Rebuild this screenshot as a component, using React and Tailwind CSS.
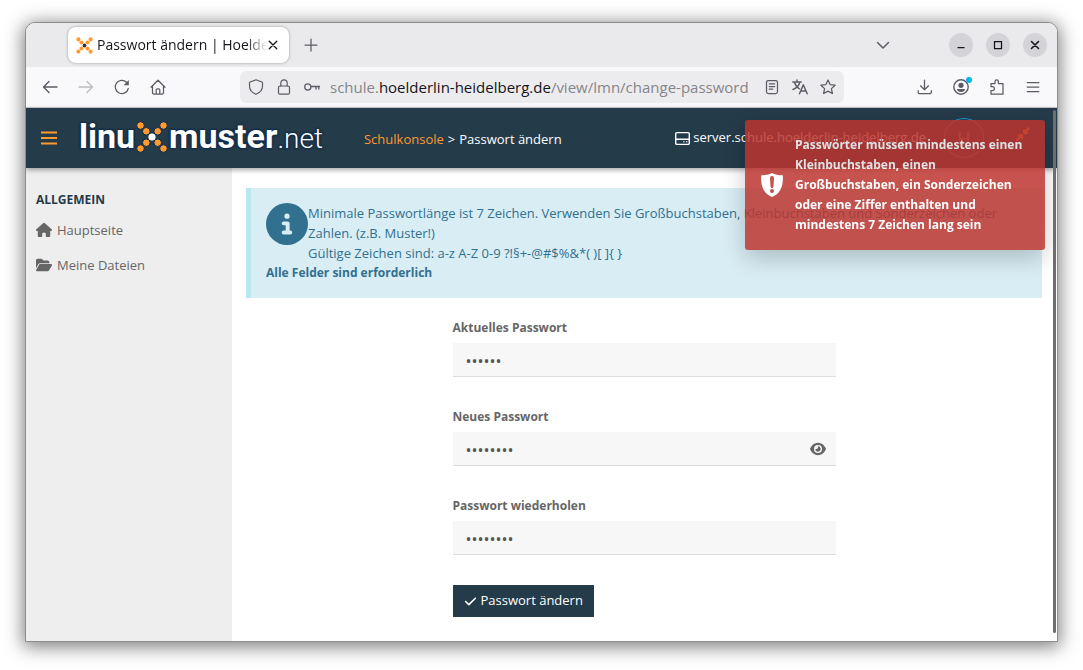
import React, { useState } from 'react';
import { FaCheck, FaCircleInfo, FaEye, FaFolderOpen, FaHouse, FaRegHardDrive } from 'react-icons/fa6';
import { FaCompressAlt } from 'react-icons/fa';

const strokeProps = {
  fill: 'none',
  stroke: 'currentColor',
  strokeLinecap: 'round',
  strokeLinejoin: 'round',
};

const Icon = ({ children, className = 'size-4', width = 1.25 }) => (
  <svg viewBox="0 0 16 16" className={className} strokeWidth={width} {...strokeProps} aria-hidden="true">
    {children}
  </svg>
);

const LogoMark = ({ className, center, outline = 0 }) => (
  <svg viewBox="0 0 32 32" className={className} aria-hidden="true">
    <g fill="#ff9a2e" stroke="#0b2748" strokeWidth={outline}>
      {[4.5, 10.3, 21.7, 27.5].map((p) => (
        <g key={p}>
          <circle cx={p} cy={p} r="3.8" />
          <circle cx={p} cy={32 - p} r="3.8" />
        </g>
      ))}
    </g>
    <circle cx="16" cy="16" r="3.6" fill={center} />
  </svg>
);

const ToolbarButton = ({ label, children, className = '' }) => (
  <button type="button" aria-label={label} className={`relative flex h-8 w-9 items-center justify-center ${className}`}>
    {children}
  </button>
);

const WindowButton = ({ label, children }) => (
  <button type="button" aria-label={label} className="flex size-6 items-center justify-center rounded-full bg-[#d4d3d8] text-[#15141a]">
    {children}
  </button>
);

const TitleBar = () => (
  <div className="flex h-11 items-center bg-[#eaeaec] pr-[10px] pl-[42px]">
    <div className="flex h-9 w-[221px] items-center rounded-lg bg-white pr-[10px] pl-2 shadow-[0_0_3px_rgba(0,0,0,0.35)]">
      <LogoMark className="mr-1 size-[17px] shrink-0" center="#1d3c5c" />
      <span className="min-w-0 flex-1 overflow-hidden text-sm whitespace-nowrap text-[#15141a] [mask-image:linear-gradient(to_right,black_88%,transparent)]">
        Passwort ändern | Hoelderlin
      </span>
      <button type="button" aria-label="Tab schließen" className="text-[#15141a]">
        <Icon className="size-3" width={1.8}>
          <path d="M3 3l10 10M13 3L3 13" />
        </Icon>
      </button>
    </div>
    <button type="button" aria-label="Neuer Tab" className="ml-[14px] text-[#5b5b66]">
      <Icon>
        <path d="M8 2v12M2 8h12" />
      </Icon>
    </button>
    <button type="button" aria-label="Alle Tabs" className="mr-[58px] ml-auto text-[#5b5b66]">
      <Icon width={1.5}>
        <path d="M2.5 5.5L8 11l5.5-5.5" />
      </Icon>
    </button>
    <div className="flex gap-[13px]">
      <WindowButton label="Minimieren">
        <Icon>
          <path d="M4.500 10.500h7" strokeLinecap="butt" />
        </Icon>
      </WindowButton>
      <WindowButton label="Maximieren">
        <Icon>
          <path d="M4.500 4.500h7v7h-7z" strokeLinejoin="miter" />
        </Icon>
      </WindowButton>
      <WindowButton label="Schließen">
        <Icon width={1.6}>
          <path d="M4.500 4.500l7 7M11.500 4.500l-7 7" />
        </Icon>
      </WindowButton>
    </div>
  </div>
);

const AddressBar = () => (
  <div className="mr-[63px] ml-16 flex h-8 min-w-0 flex-1 items-center rounded-md bg-[#ececee] px-2 text-[#5b5b66]">
    <div className="flex shrink-0 gap-3">
      <Icon width={1.2}>
        <path d="M8 .8L14.500 3.200V7c0 4-2.500 6.700-6.500 8.300C4 13.700 1.500 11 1.500 7V3.200z" />
      </Icon>
      <Icon width={1.2}>
        <rect x="2.500" y="7" width="11" height="8.200" rx="1.500" />
        <path d="M4.800 7V4a3.200 3.200 0 0 1 6.400 0v3" />
      </Icon>
      <Icon width={1.3}>
        <circle cx="3.800" cy="8" r="3.100" />
        <path d="M7 7.500h8.500M12 7.500v2.500M14.800 7.500v2.500" />
      </Icon>
    </div>
    <span className="ml-[10px] min-w-0 flex-1 overflow-hidden text-[15px] whitespace-nowrap text-[#85858a]">
      schule.<span className="text-[#15141a]">hoelderlin-heidelberg.de</span>/view/lmn/change-password
    </span>
    <div className="flex shrink-0 gap-3">
      <Icon>
        <rect x="2.500" y="1.500" width="11" height="13" rx="1.800" />
        <path d="M5.300 4.800h5.400M5.300 7.500h5.400M5.300 10.200h3.400" />
      </Icon>
      <Icon width={1.4}>
        <path d="M.8 3h8.400M5 1v2M7.800 3C7.200 6 5 8.800 1 10.500M2.500 3.500C3.500 6.500 5.500 8.800 7.500 9.800" />
        <path d="M7.500 14.800L11.300 5.800l3.900 9M8.800 12h5.200" />
      </Icon>
      <Icon>
        <path d="M8 1l2.100 4.600 5 .6-3.700 3.400 1 4.900L8 12.100l-4.400 2.400 1-4.900L.9 6.200l5-.6z" />
      </Icon>
    </div>
  </div>
);

const Toolbar = () => (
  <div className="flex h-[41px] items-center border-b border-[#c9c9cd] bg-[#f9f9fb] px-[6px] text-[#5b5b66]">
    <ToolbarButton label="Zurück">
      <Icon width={1.4}>
        <path d="M15 8H1.500M7 2.500L1.500 8 7 13.500" />
      </Icon>
    </ToolbarButton>
    <ToolbarButton label="Vor" className="text-[#bcbcc1]">
      <Icon width={1.4}>
        <path d="M1 8h13.500M9 2.500L14.500 8 9 13.500" />
      </Icon>
    </ToolbarButton>
    <ToolbarButton label="Neu laden">
      <Icon>
        <path d="M14.300 9.500A6.600 6.600 0 1 1 12.500 3.200" />
        <path d="M14.800 1v5.200H9.600z" fill="currentColor" stroke="none" />
      </Icon>
    </ToolbarButton>
    <ToolbarButton label="Startseite">
      <Icon>
        <path d="M1 8.200L8 1.200l7 7M2.500 7v6.800a1.200 1.200 0 0 0 1.200 1.200h8.600a1.200 1.200 0 0 0 1.200-1.200V7M6.200 15v-4.200a1 1 0 0 1 1-1h1.600a1 1 0 0 1 1 1V15" />
      </Icon>
    </ToolbarButton>
    <AddressBar />
    <ToolbarButton label="Downloads">
      <Icon>
        <path d="M7.500 1v9.500M3.500 6.800l4 3.900 4-3.900M1.200 11.500v1.700a1.500 1.500 0 0 0 1.500 1.500h10.100a1.500 1.500 0 0 0 1.500-1.500v-1.700" />
      </Icon>
    </ToolbarButton>
    <ToolbarButton label="Konto">
      <Icon width={1.4}>
        <circle cx="8" cy="8" r="7.200" />
        <circle cx="8" cy="6.300" r="2.600" fill="currentColor" stroke="none" />
        <path d="M4 10h8c0 1.800-1.800 3-4 3s-4-1.200-4-3z" fill="currentColor" stroke="none" />
      </Icon>
      <span className="absolute top-[6px] right-[7px] size-[6px] rounded-full bg-[#00b3f4]" />
    </ToolbarButton>
    <ToolbarButton label="Erweiterungen">
      <Icon>
        <path d="M2 6V4.500h4V2.600a1.700 1.700 0 0 1 3.400 0v1.900H14v10.700H2V11.500h1.500a1.900 1.900 0 0 0 0-3.800H2z" />
      </Icon>
    </ToolbarButton>
    <ToolbarButton label="Menü">
      <Icon>
        <path d="M2.200 3.500h11.600M2.200 8h11.600M2.200 12.500h11.600" />
      </Icon>
    </ToolbarButton>
  </div>
);

const Header = () => (
  <header className="relative z-10 flex h-[60px] items-center bg-[#243b4a] px-[15px] text-[13px] text-white shadow-[0_2px_5px_rgba(0,0,0,0.35)]">
    <button type="button" aria-label="Menü umschalten" className="text-[#ff9a2e]">
      <Icon width={2}>
        <path d="M0 2.500h16M0 8h16M0 13.500h16" strokeLinecap="butt" />
      </Icon>
    </button>
    <a
      href="#home"
      aria-label="linuxmuster.net"
      className="mb-1 ml-[22px] flex items-baseline font-['Roboto'] text-[34px] leading-none [text-shadow:0_0_2px_#0b2748,0_0_2px_#0b2748,0_0_3px_#0b2748]"
    >
      <span className="font-bold">linu</span>
      <LogoMark className="mx-px size-8 shrink-0 self-end" center="#ffffff" outline={1} />
      <span className="font-bold">muster</span>
      <span className="text-[28px] leading-none font-light">.net</span>
    </a>
    <nav className="ml-[41px] flex gap-1 pt-1 whitespace-nowrap">
      <a href="#konsole" className="text-[#ff9a2e]">Schulkonsole</a>
      <span>&gt;</span>
      <span>Passwort ändern</span>
    </nav>
    <div className="ml-auto flex items-center whitespace-nowrap">
      <FaRegHardDrive className="mr-[3px] size-[15px]" />
      <span>server.schule.hoelderlin-heidelberg.de</span>
      <span className="mr-5 ml-[18px] flex size-10 items-center justify-center rounded-full border border-[#5f7684] border-t-[#1e9ede] text-lg text-[#7e929d]">
        H
      </span>
    </div>
    <button type="button" aria-label="Verkleinern" className="mr-[11px] mb-2 ml-[11px] text-[#ff9a2e]">
      <FaCompressAlt className="size-4" />
    </button>
  </header>
);

const Sidebar = () => (
  <aside className="w-[206px] shrink-0 bg-[#eeeeee] pt-[22px] pl-[10px] text-[13px] text-[#666666]">
    <h2 className="text-xs leading-5 font-bold text-[#243b4a]">ALLGEMEIN</h2>
    <nav className="mt-[10px] flex flex-col gap-[15px] leading-5">
      <a href="#home" className="flex items-center gap-[5px]">
        <FaHouse className="size-4" />
        Hauptseite
      </a>
      <a href="#files" className="flex items-center gap-[5px]">
        <FaFolderOpen className="size-4" />
        Meine Dateien
      </a>
    </nav>
  </aside>
);

const Hint = () => (
  <div className="border-l-[5px] border-[#b9e7ef] bg-[#d9edf5] p-[15px] text-[13px] leading-5 text-[#31708f]">
    <div className="flex">
      <FaCircleInfo className="size-[42px] shrink-0" />
      <p>
        Minimale Passwortlänge ist 7 Zeichen. Verwenden Sie Großbuchstaben, Kleinbuchstaben und Sonderzeichen oder
        Zahlen. (z.B. Muster!)
        <br />
        Gültige Zeichen sind: a-z A-Z 0-9 ?!§+-@#$%&amp;*( )[ ]{'{ }'}
      </p>
    </div>
    <strong className="block text-xs leading-5">Alle Felder sind erforderlich</strong>
  </div>
);

const PasswordField = ({ id, label, initial, toggle }) => {
  const [value, setValue] = useState(initial);
  const [visible, setVisible] = useState(false);

  return (
    <div className="mb-[30px]">
      <label htmlFor={id} className="mb-[5px] block text-xs leading-5 font-bold">
        {label}
      </label>
      <div className="relative">
        <input
          id={id}
          type={visible ? 'text' : 'password'}
          value={value}
          onChange={(e) => setValue(e.target.value)}
          className="block h-[34px] w-full border-b border-[#dddddd] bg-[#f7f7f7] px-[13px] pt-[2px] text-base text-[#555555] outline-none"
        />
        {toggle && (
          <button
            type="button"
            aria-label="Passwort anzeigen"
            onClick={() => setVisible(!visible)}
            className="absolute top-[9px] right-[10px]"
          >
            <FaEye className="size-4" />
          </button>
        )}
      </div>
    </div>
  );
};

const Toast = () => (
  <div
    role="alert"
    className="absolute top-3 right-3 z-20 flex w-[300px] items-center rounded-[3px] bg-[#bd362f] py-[15px] pr-[15px] pl-4 text-xs leading-5 font-bold text-white opacity-85 shadow-[0_8px_24px_rgba(0,0,0,0.25)]"
  >
    <svg viewBox="0 0 22 24" className="mr-3 h-6 w-[22px] shrink-0" aria-hidden="true">
      <path
        fill="currentColor"
        d="M11 0c3 1.600 6.500 2.300 10.800 2.300C22.500 12 20 20.500 11 24 2 20.500-.5 12 .2 2.300 4.500 2.300 8 1.600 11 0z"
      />
      <path d="M9 5a2 2 0 0 1 4 0l-.5 8.500a1.500 1.500 0 0 1-3 0z" fill="#bd362f" />
      <circle cx="11" cy="18" r="2" fill="#bd362f" />
    </svg>
    <p>
      Passwörter müssen mindestens einen Kleinbuchstaben, einen
      <br />
      Großbuchstaben, ein Sonderzeichen
      <br />
      oder eine Ziffer enthalten und
      <br />
      mindestens 7 Zeichen lang sein
    </p>
  </div>
);

const App = () => {
  return (
    <div className="flex min-h-screen bg-white px-[25px] pt-[22px] pb-7 font-['Open_Sans',sans-serif]">
      <div className="flex min-w-0 flex-1 flex-col overflow-hidden rounded-t-[10px] border border-[#8c8c8c] bg-white shadow-[0_3px_18px_2px_rgba(0,0,0,0.5)]">
        <TitleBar />
        <Toolbar />
        <div className="relative flex flex-1 flex-col">
          <Header />
          <div className="flex flex-1">
            <Sidebar />
            <main className="min-w-0 flex-1 pt-5 pr-[15px] pb-6 pl-[14px]">
              <Hint />
              <form className="mx-auto mt-5 w-full max-w-[383px] text-[13px] text-[#666666]">
                <PasswordField id="current" label="Aktuelles Passwort" initial="muster" />
                <PasswordField id="new" label="Neues Passwort" initial="muster12" toggle />
                <PasswordField id="repeat" label="Passwort wiederholen" initial="muster12" />
                <button type="button" className="flex h-8 items-center gap-1 bg-[#243b4a] px-[11px] text-white">
                  <FaCheck className="size-[13px]" />
                  Passwort ändern
                </button>
              </form>
            </main>
          </div>
          <Toast />
          <div className="absolute top-[2px] right-[1px] bottom-2 z-30 w-[3px] rounded-full bg-[#6e6e70]" />
        </div>
      </div>
    </div>
  );
};

export default App;
